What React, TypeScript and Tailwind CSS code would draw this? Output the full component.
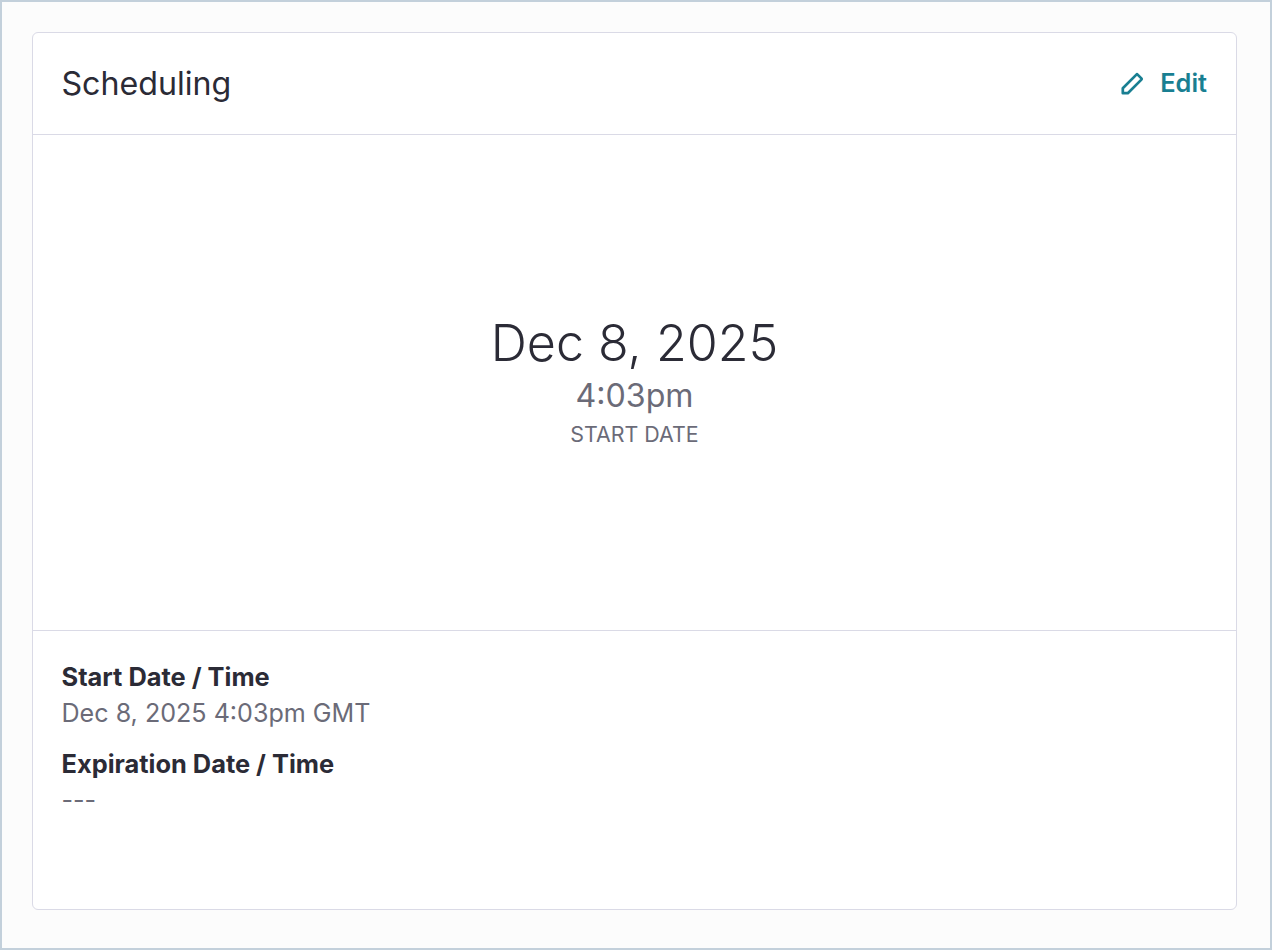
const details = [
  { label: "Start Date / Time", value: "Dec 8, 2025 4:03pm GMT" },
  { label: "Expiration Date / Time", value: "---" },
];

const PencilIcon = () => {
  return (
    <svg
      width="24"
      height="24"
      viewBox="0 0 24 24"
      fill="none"
      stroke="currentColor"
      strokeWidth="2.7"
      strokeLinejoin="round"
    >
      <path d="M2.8 21.2V16.2L16.4 2.6Q17 2 17.6 2.6L21.4 6.4Q22 7 21.4 7.6L7.8 21.2Z" />
    </svg>
  );
};

const App = () => {
  return (
    <div className="h-screen w-full border-2 border-[#c3d0db] bg-[#fcfcfc] pt-[30px] pr-[33px] pb-[38px] pl-[30px] font-['Inter',sans-serif] text-[#2b2b36]">
      <div className="flex h-full flex-col rounded-md border border-[#dadae6] bg-white">
        <div className="flex h-[102px] items-center justify-between border-b border-[#dadae6] pr-[29px] pl-[28.4px]">
          <h2 className="text-[32.2px] leading-10">Scheduling</h2>
          <button className="flex items-end gap-4 pb-px text-[25.4px] leading-8 font-semibold text-[#197f92]">
            <span className="pb-[3px]">
              <PencilIcon />
            </span>
            Edit
          </button>
        </div>

        <div className="flex h-[496px] flex-col items-center justify-center border-b border-[#dadae6] pb-0.5">
          <p className="pb-0.5 text-[50.2px] leading-[58px] font-light">
            Dec 8, 2025
          </p>
          <p className="text-[32.2px] leading-[44px] text-[#6b6b78]">4:03pm</p>
          <p className="text-[21.4px] leading-8 text-[#6b6b78]">START DATE</p>
        </div>

        <div className="flex flex-col gap-[15px] px-[28.5px] pt-7">
          {details.map((item) => (
            <div key={item.label}>
              <p className="text-[25.4px] leading-9 font-bold">{item.label}</p>
              <p className="text-[25.1px] leading-9 text-[#6b6b78]">
                {item.value}
              </p>
            </div>
          ))}
        </div>
      </div>
    </div>
  );
};

export default App;
